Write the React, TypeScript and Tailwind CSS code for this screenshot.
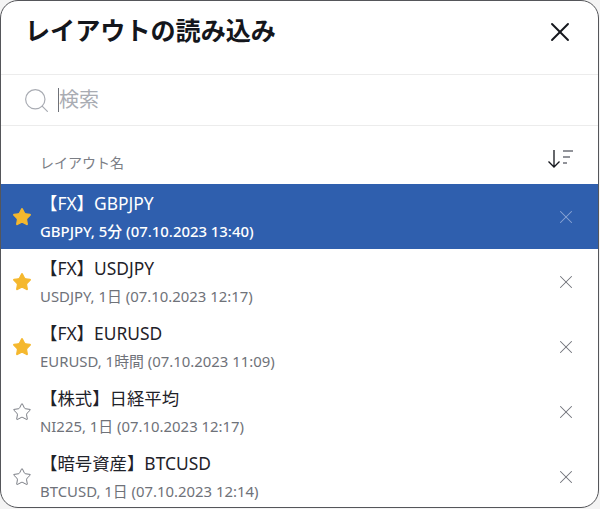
import { Star, X, Search } from 'lucide-react';

const layouts = [
  { name: '【FX】GBPJPY', meta: 'GBPJPY, 5分 (07.10.2023 13:40)', starred: true, active: true },
  { name: '【FX】USDJPY', meta: 'USDJPY, 1日 (07.10.2023 12:17)', starred: true },
  { name: '【FX】EURUSD', meta: 'EURUSD, 1時間 (07.10.2023 11:09)', starred: true },
  { name: '【株式】日経平均', meta: 'NI225, 1日 (07.10.2023 12:17)', starred: false },
  { name: '【暗号資産】BTCUSD', meta: 'BTCUSD, 1日 (07.10.2023 12:14)', starred: false },
];

function LayoutRow({ name, meta, starred, active }: { name: string; meta: string; starred: boolean; active?: boolean }) {
  return (
    <div className={`flex h-[65px] shrink-0 items-center ${active ? 'bg-[#2f5fae] text-white' : 'text-[#1f2229]'}`}>
      {/* Favourite star */}
      <div className="flex w-[39px] shrink-0 justify-center pl-[2px] pt-[1px]">
        {starred ? (
          <Star size={20} strokeWidth={1.5} className="fill-[#f5b82e] text-[#f5b82e]" />
        ) : (
          <Star size={20} strokeWidth={1.1} className="text-[#6f7279]" />
        )}
      </div>

      <div className="flex min-w-0 flex-1 flex-col gap-[9px]">
        <span className="text-[17.4px] leading-[20px]">{name}</span>
        <span className={`text-[14.9px] leading-[18px] ${active ? 'font-medium text-white' : 'text-[#6f7279]'}`}>{meta}</span>
      </div>

      <X size={22} strokeWidth={1.1} className={`mr-[21px] shrink-0 ${active ? 'text-[#8ba6d6]' : 'text-[#6f7279]'}`} />
    </div>
  );
}

export default function App() {
  return (
    <div className="h-[509px] w-[600px] bg-[#f4f4f4] font-['Noto_Sans','Noto_Sans_CJK_JP',sans-serif]">
      <div className="flex h-[508px] w-[599px] flex-col overflow-hidden rounded-[18px] border-[1.5px] border-[#55565a] bg-white">
        {/* Title */}
        <div className="flex h-[74px] shrink-0 items-start justify-between border-b border-[#ececec] pl-[24px] pr-[22px] pt-[12px]">
          <h1 className="text-[25.1px] font-bold leading-[34px] text-[#14161c]">レイアウトの読み込み</h1>
          <X size={32} strokeWidth={1.4} className="mt-[3px] text-[#14161c]" />
        </div>

        {/* Search */}
        <div className="flex h-[51px] shrink-0 items-center border-b border-[#ececec] pl-[21px]">
          <Search size={29} strokeWidth={1} className="text-[#a9acb3]" />
          <div className="ml-[7px] h-[24px] w-px bg-[#6f7279]" />
          <span className="text-[20px] text-[#a9acb3]">検索</span>
        </div>

        {/* List header */}
        <div className="flex h-[58px] shrink-0 items-center justify-between pl-[39px] pr-[24px]">
          <span className="mt-[14px] text-[14px] text-[#7b7e85]">レイアウト名</span>
          <svg width="28" height="22" viewBox="0 0 28 22" fill="none" className="mt-[7px] -mr-[1px]">
            <path d="M7 2v17M1.5 13.5 7 19l5.5-5.5" stroke="#14161c" strokeWidth="1.3" />
            <path d="M16 3h10M16 9h7M16 15h4" stroke="#6f7279" strokeWidth="1.5" />
          </svg>
        </div>

        {/* Saved layouts */}
        <div className="flex flex-col">
          {layouts.map((layout) => (
            <LayoutRow key={layout.name} {...layout} />
          ))}
        </div>
      </div>
    </div>
  );
}
